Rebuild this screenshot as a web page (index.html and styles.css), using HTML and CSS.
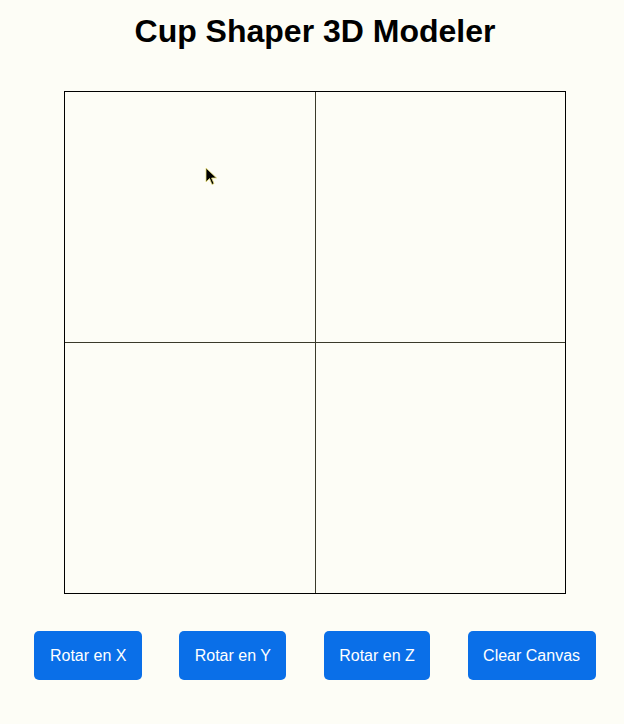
FILE: index.html
```html
<!DOCTYPE html>
<html lang="es">
<head>
<meta charset="utf-8">
<title>Cup Shaper 3D Modeler</title>
<link rel="stylesheet" href="styles.css">
</head>
<body>
<div class="page">
  <h1 class="title">Cup Shaper 3D Modeler</h1>
  <div class="stage">
    <div class="canvas">
      <div class="cell"></div>
      <div class="cell"></div>
      <div class="cell"></div>
      <div class="cell"></div>
    </div>
    <svg class="cursor" width="14" height="20" viewBox="0 0 14 20">
      <path d="M1 1 L1 15 L4.5 11.5 L7 17.5 L9 16.6 L6.6 11 L11.5 11 Z" fill="#000" stroke="#e8e07a" stroke-width="0.8"/>
    </svg>
  </div>
  <div class="controls">
    <button class="btn">Rotar en X</button>
    <button class="btn">Rotar en Y</button>
    <button class="btn">Rotar en Z</button>
    <button class="btn">Clear Canvas</button>
  </div>
</div>
</body>
</html>
```
FILE: styles.css
```css
html, body {
  margin: 0;
  padding: 0;
  overflow: hidden;
}
body {
  background-color: #fdfdf6;
  font-family: "Liberation Sans", Arial, sans-serif;
}
.page {
  width: 630px;
  display: flex;
  flex-direction: column;
  align-items: center;
}
.title {
  margin: 13px 0 0;
  font-size: 32px;
  font-weight: bold;
  line-height: 37px;
  color: #000;
}
.stage {
  position: relative;
  margin-top: 41px;
}
.canvas {
  width: 500px;
  height: 501px;
  border: 1px solid #000;
  display: grid;
  grid-template-columns: 250px 249px;
  grid-template-rows: 250px 250px;
  gap: 1px;
  background: #3a3a2a;
}
.cell {
  background-color: #fdfdf6;
}
.cursor {
  position: absolute;
  left: 141px;
  top: 76px;
}
.controls {
  margin-top: 37px;
  display: flex;
  justify-content: center;
  gap: 37.3px;
  width: 630px;
}
.btn {
  font-family: "Liberation Sans", Arial, sans-serif;
  font-size: 16px;
  color: #fff;
  background: #0a6fe8;
  border: none;
  border-radius: 5px;
  padding: 15px 15.5px;
  line-height: 19px;
  height: 49px;
  cursor: pointer;
}
```
